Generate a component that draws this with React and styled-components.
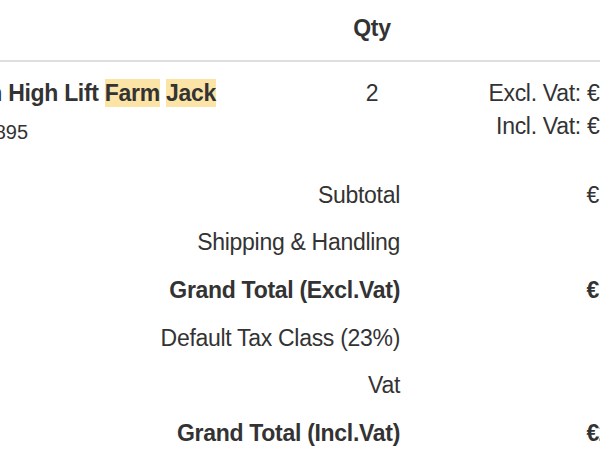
import styled, { createGlobalStyle } from 'styled-components';

const GlobalStyle = createGlobalStyle`
  html, body {
    margin: 0;
    padding: 0;
    background: #fff;
  }
  body {
    font-family: "Liberation Sans", Arial, sans-serif;
    color: #333;
  }
`;

const Frame = styled.div`
  width: 600px;
  height: 450px;
  overflow: hidden;
  background: #fff;
`;

const Sheet = styled.div`
  width: 1100px;
  margin-left: -260px;
  font-size: 23px;
  letter-spacing: -0.3px;
  line-height: 31px;
`;

const Row = styled.div`
  display: grid;
  grid-template-columns: 572px 120px 236px 1fr;
  align-items: start;
`;

const HeadRow = styled(Row)`
  padding: 13px 0 16px;
  border-bottom: 2px solid #dedede;
  font-weight: bold;
`;

const ItemRow = styled(Row)`
  padding-top: 15.5px;
`;

const Cell = styled.div`
  text-align: ${(p) => p.$align || 'left'};
  padding-left: ${(p) => p.$indent || 0}px;
  white-space: nowrap;
`;

const Name = styled.div`
  font-weight: bold;
`;

const Sku = styled.div`
  margin-top: 8px;
  margin-left: 4px;
  font-size: 20px;
  letter-spacing: 0;
`;

const Mark = styled.mark`
  background: #fbe4a6;
  color: inherit;
  padding: 1px 0;
`;

const PriceLine = styled.div`
  & + & {
    margin-top: 2px;
  }
`;

const Totals = styled.div`
  padding-top: 24px;
`;

const TotalRow = styled.div`
  display: grid;
  grid-template-columns: 660px 286px;
  height: 47.6px;
  align-items: center;
  font-weight: ${(p) => (p.$strong ? 'bold' : 'normal')};
`;

const TotalLabel = styled.div`
  text-align: right;
  white-space: nowrap;
`;

const TotalValue = styled.div`
  text-align: right;
  white-space: nowrap;
`;

const totals = [
  { label: 'Subtotal', value: '€1,840.00' },
  { label: 'Shipping & Handling', value: '€0.00' },
  { label: 'Grand Total (Excl.Vat)', value: '€1,840.00', strong: true },
  { label: 'Default Tax Class (23%)', value: '€423.20' },
  { label: 'Vat', value: '€423.20' },
  { label: 'Grand Total (Incl.Vat)', value: '€2,263.20', strong: true },
];

export default function App() {
  return (
    <>
      <GlobalStyle />
      <Frame>
        <Sheet>
          <HeadRow>
            <Cell $indent={21}>Product</Cell>
            <Cell $align="center">Qty</Cell>
            <Cell $align="right">Price</Cell>
            <Cell $align="right">Subtotal</Cell>
          </HeadRow>
          <ItemRow>
            <Cell $indent={21}>
              <Name>
                Hi-Lift Galvanised 48in High Lift <Mark>Farm</Mark> <Mark>Jack</Mark>
              </Name>
              <Sku>SKU: HL484-GALV-HL-10895</Sku>
            </Cell>
            <Cell $align="center">2</Cell>
            <Cell $align="right">
              <PriceLine>Excl. Vat: €920.00</PriceLine>
              <PriceLine>Incl. Vat: €984.00</PriceLine>
            </Cell>
            <Cell $align="right">€1,840.00</Cell>
          </ItemRow>
          <Totals>
            {totals.map((t) => (
              <TotalRow key={t.label} $strong={t.strong}>
                <TotalLabel>{t.label}</TotalLabel>
                <TotalValue>{t.value}</TotalValue>
              </TotalRow>
            ))}
          </Totals>
        </Sheet>
      </Frame>
    </>
  );
}
